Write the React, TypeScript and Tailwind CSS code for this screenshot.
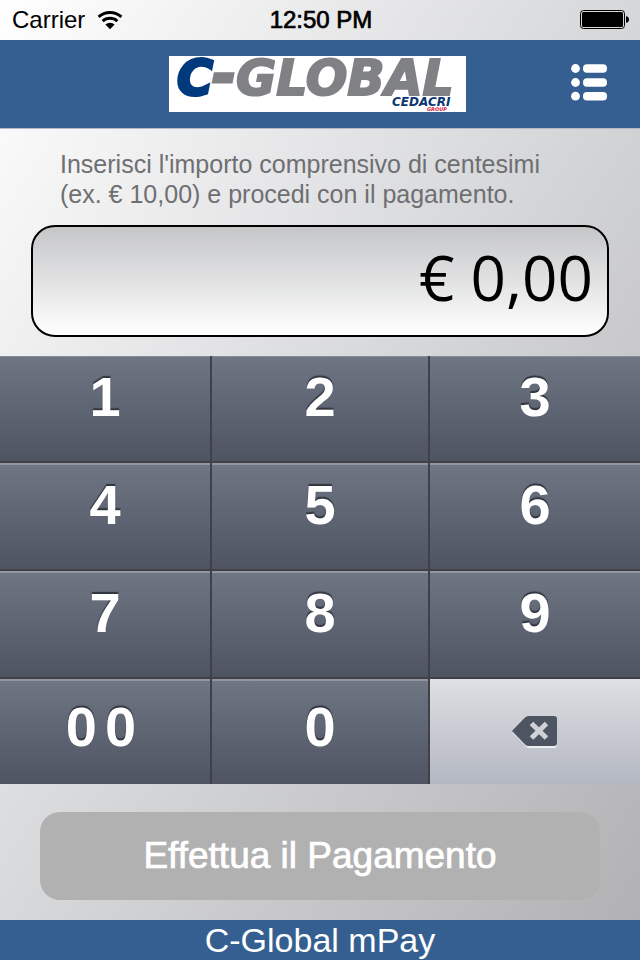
import { useState } from "react";
import clsx from "clsx";

const KEY_ROWS = [
  ["1", "2", "3"],
  ["4", "5", "6"],
  ["7", "8", "9"],
  ["00", "0", "delete"],
];

function formatAmount(cents: number) {
  return `€ ${(cents / 100).toFixed(2).replace(".", ",")}`;
}

function WifiIcon() {
  return (
    <svg width="26" height="20" viewBox="0 0 26 20" aria-hidden="true">
      <g fill="none" stroke="#000" strokeWidth="2.9">
        <path d="M1.6 6.9A17 17 0 0 1 24.4 6.9" />
        <path d="M5.6 11.1A11.2 11.2 0 0 1 20.4 11.1" />
      </g>
      <path d="M13 19.2L8.4 14.4A7 7 0 0 1 17.6 14.4Z" />
    </svg>
  );
}

function BatteryIcon() {
  return (
    <svg width="50" height="20" viewBox="0 0 50 20" aria-hidden="true">
      <rect x="0.5" y="0.5" width="44" height="18" rx="3" fill="none" stroke="#000" />
      <rect x="2" y="2" width="41" height="15" rx="1.5" />
      <path d="M46 6.2C48 6.4 49 7.8 49 9.5C49 11.2 48 12.6 46 12.8Z" />
    </svg>
  );
}

function ListIcon() {
  return (
    <svg width="36" height="37" viewBox="0 0 36 37" fill="#fff" aria-hidden="true">
      {[4.5, 18.5, 32.2].map((y) => (
        <g key={y}>
          <circle cx="4.5" cy={y} r="4.4" />
          <rect x="12" y={y - 4.3} width="24" height="8.6" rx="4" />
        </g>
      ))}
    </svg>
  );
}

function DeleteIcon() {
  return (
    <svg width="46" height="34" viewBox="0 0 46 34" aria-hidden="true">
      <path d="M0.5 17.5L14 4Q15.5 2.5 17.5 2.5H42Q45 2.5 45 5.5V30Q45 33 42 33H17.5Q15.5 33 14 31.5Z" fill="#eceef1" />
      <path d="M0 16L13 2.5Q14.5 1 16.5 1H42Q45 1 45 4V28Q45 31 42 31H16.5Q14.5 31 13 29.5Z" fill="#4d5563" />
      <path d="M19.5 8.5L34.5 23M34.5 8.5L19.5 23" stroke="#d0d2d7" strokeWidth="5" />
    </svg>
  );
}

function Logo() {
  return (
    <svg
      width="297"
      height="56"
      viewBox="0 0 297 56"
      className="overflow-visible bg-white"
      role="img"
      aria-label="C-Global Cedacri Group"
    >
      <g fontFamily="'DejaVu Sans', sans-serif" fontStyle="italic" fontWeight="700" fill="#808185">
        <text x="43" y="39" fontSize="58" stroke="#808185" strokeWidth="3">
          -
        </text>
        <text x="8" y="39" fontSize="49" fill="#003a7d" stroke="#003a7d" strokeWidth="3">
          C
        </text>
        <text x="67" y="39" fontSize="49" stroke="#808185" strokeWidth="2">
          GLOBAL
        </text>
        <text x="223" y="50" fontSize="12" fill="#0b3673">
          CEDACRI
        </text>
        <text x="258" y="55" fontSize="5" fill="#d8173f">
          GROUP
        </text>
      </g>
    </svg>
  );
}

interface KeyProps {
  label: string;
  firstRow: boolean;
  lastRow: boolean;
  lastColumn: boolean;
  onPress: () => void;
}

function Key({ label, firstRow, lastRow, lastColumn, onPress }: KeyProps) {
  const edge = clsx(!lastColumn && "border-r-2", !lastRow && "border-b-2", "border-[#404146]");

  if (label === "delete") {
    return (
      <button
        type="button"
        aria-label="Cancella"
        onClick={onPress}
        className="flex items-center justify-center bg-linear-to-b from-[#dfe0e4] to-[#b3b7c1]"
      >
        <DeleteIcon />
      </button>
    );
  }

  return (
    <button type="button" onClick={onPress} className={clsx("flex flex-col bg-[#404146]", edge)}>
      <span
        className={clsx(
          "flex w-full flex-1 justify-center bg-linear-to-b from-[#6e7583] to-[#4e5462] text-[56px] leading-16 font-bold text-white [text-shadow:0_-2px_1px_#30343d]",
          firstRow ? "border-t border-[#858b98]" : "border-t-2 border-[#9396a1]",
          lastRow ? "pt-3.5" : "pt-2",
        )}
      >
        {label.split("").map((digit, i) => (
          <span key={i} className={clsx(label.length > 1 && "mr-2")}>
            {digit}
          </span>
        ))}
      </span>
    </button>
  );
}

export default function App() {
  const [cents, setCents] = useState(0);

  function press(key: string) {
    if (key === "delete") {
      setCents((value) => Math.floor(value / 10));
      return;
    }
    setCents((value) => Number(`${value}${key}`) % 100000000);
  }

  return (
    <div className="flex min-h-screen flex-col bg-linear-to-br from-white via-[#d6d7d9] to-[#b0b0b2] font-['Liberation_Sans',Arial,sans-serif]">
      <div className="grid h-10 grid-cols-3 items-center pr-2.5 pl-3 text-2xl text-black">
        <div className="flex items-center gap-3">
          <span>Carrier</span>
          <WifiIcon />
        </div>
        <time className="text-center [-webkit-text-stroke:0.03em_black]">12:50 PM</time>
        <div className="flex justify-end">
          <BatteryIcon />
        </div>
      </div>

      <header className="grid h-22 grid-cols-[1fr_auto_1fr] items-center bg-[#365f91] pr-[5px]">
        <span />
        <Logo />
        <button type="button" aria-label="Menu" className="mr-7 mb-1 justify-self-end">
          <ListIcon />
        </button>
      </header>

      <main className="flex flex-1 flex-col border-t border-[#b4bac4]">
        <label htmlFor="amount" className="px-15 pt-5 text-[25px] leading-[30px] text-[#6e6f72]">
          Inserisci l'importo comprensivo di centesimi
          <br />
          (ex. € 10,00) e procedi con il pagamento.
        </label>
        <input
          id="amount"
          readOnly
          value={formatAmount(cents)}
          className="mx-[31px] mt-4 mb-[19px] h-28 rounded-3xl border-2 border-black bg-linear-to-b from-[#c5c6c8] to-white px-3.5 pb-2 text-right font-['Open_Sans',sans-serif] text-[62px] text-black outline-none"
        />

        <div className="grid grid-cols-[212fr_218fr_210fr] grid-rows-[107px_108px_108px_105px]">
          {KEY_ROWS.map((row, r) =>
            row.map((label, c) => (
              <Key
                key={label}
                label={label}
                firstRow={r === 0}
                lastRow={r === KEY_ROWS.length - 1}
                lastColumn={c === row.length - 1}
                onPress={() => press(label)}
              />
            )),
          )}
        </div>

        <div className="px-10 pt-7 pb-5">
          <button
            type="button"
            className="h-22 w-full rounded-[20px] bg-[#b1b1b1] text-[37px] text-white [-webkit-text-stroke:0.02em_white]"
          >
            Effettua il Pagamento
          </button>
        </div>
      </main>

      <footer className="bg-[#365f91] text-center text-[34px] leading-10 text-white">C-Global mPay</footer>
    </div>
  );
}
